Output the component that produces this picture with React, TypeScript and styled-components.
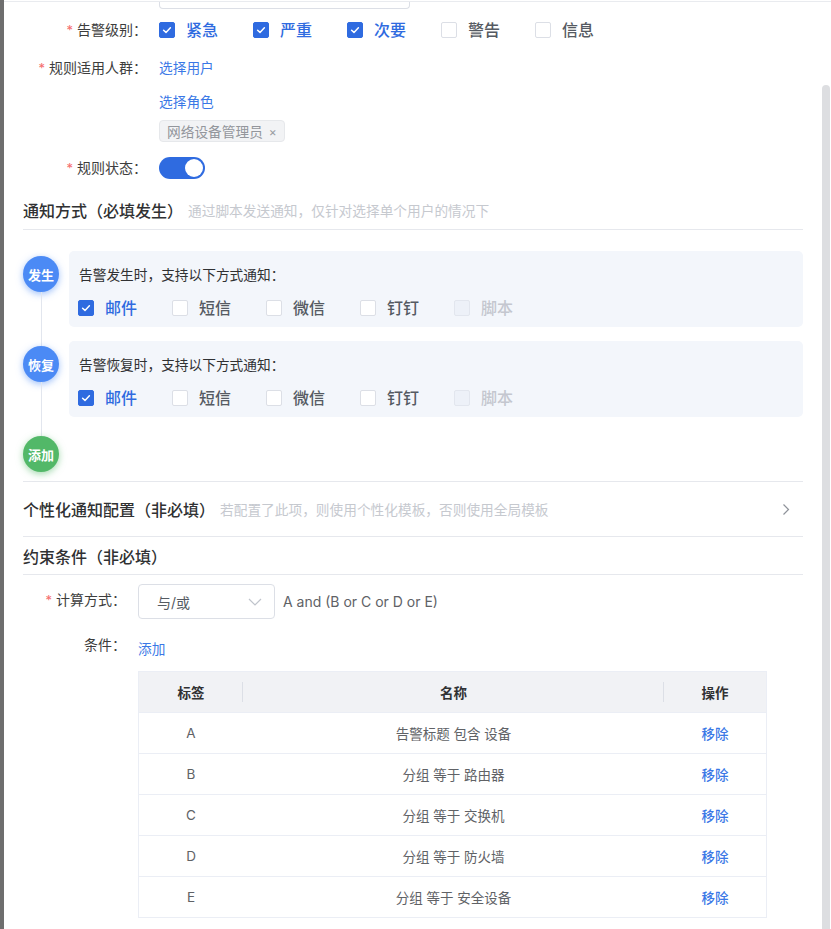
import React from "react";
import styled, { createGlobalStyle } from "styled-components";

const GlobalStyle = createGlobalStyle`
  html, body { margin: 0; padding: 0; background: #fff; }
  body {
    font-family: "Inter", "Noto Sans CJK SC", sans-serif;
    color: #303133;
    -webkit-font-smoothing: antialiased;
  }
  * { box-sizing: border-box; }
`;

const BLUE = "#2f6be0";
const LINK = "#3a78e6";

const Page = styled.div`
  position: relative;
  display: flex;
  min-height: 929px;
  height: 929px;
  overflow: hidden;
  background: #fff;
`;

const SideStrip = styled.div`
  width: 4px;
  flex: none;
  background: #6e6e6e;
`;

const Main = styled.div`
  flex: 1;
  display: flex;
  flex-direction: column;
`;

const TopBar = styled.div`
  margin-top: 1px;
  border-top: 1px solid #e9ebef;
  padding-left: 155px;
  height: 7px;
`;

const InputStub = styled.div`
  width: 251px;
  height: 7px;
  border: 1px solid #dcdfe6;
  border-top: 0;
  border-radius: 0 0 4px 4px;
`;

const Content = styled.div`
  padding: 0 28px 0 19px;
  display: flex;
  flex-direction: column;
`;

const FormItem = styled.div<{ $label: number; $mt: number }>`
  display: grid;
  grid-template-columns: ${(p) => p.$label}px 1fr;
  margin-top: ${(p) => p.$mt}px;
  align-items: start;
`;

const Label = styled.div`
  text-align: right;
  padding-right: 12px;
  font-size: 14px;
  line-height: 32px;
  color: #3d3d3d;
  white-space: nowrap;
`;

const Star = styled.span`
  color: #f56c6c;
  margin-right: 4px;
  font-size: 13px;
`;

const Field = styled.div<{ $h?: number }>`
  display: flex;
  align-items: center;
  min-height: ${(p) => p.$h ?? 32}px;
`;

const FieldColumn = styled.div`
  display: flex;
  flex-direction: column;
  align-items: flex-start;
`;

const CheckGroup = styled.div`
  display: flex;
  align-items: center;
  height: 22px;
`;

const CheckItem = styled.label<{ $checked?: boolean; $disabled?: boolean }>`
  width: 94px;
  display: inline-flex;
  align-items: center;
  gap: 11px;
  font-size: 16px;
  line-height: 22px;
  font-weight: 500;
  color: ${(p) => (p.$disabled ? "#c4c7cf" : p.$checked ? BLUE : "#555a62")};
  white-space: nowrap;
`;

const Box = styled.span<{ $checked?: boolean; $disabled?: boolean }>`
  width: 16px;
  height: 16px;
  flex: none;
  border-radius: 2px;
  display: inline-flex;
  align-items: center;
  justify-content: center;
  border: 1px solid
    ${(p) => (p.$checked ? BLUE : p.$disabled ? "#e2e6ee" : "#dcdfe6")};
  background: ${(p) => (p.$checked ? BLUE : p.$disabled ? "#edf1f8" : "#fff")};
`;

const LinkText = styled.a<{ $mt?: number; $pt?: number; $lh?: number }>`
  display: block;
  color: ${LINK};
  font-size: 13.7px;
  line-height: ${(p) => p.$lh ?? 32}px;
  margin-top: ${(p) => p.$mt ?? 0}px;
  padding-top: ${(p) => p.$pt ?? 0}px;
  cursor: pointer;
  text-decoration: none;
`;

const Tag = styled.span`
  margin-top: 2px;
  height: 22px;
  display: inline-flex;
  align-items: center;
  gap: 6px;
  padding: 0 7px;
  background: #f2f3f5;
  border: 1px solid #e6e8eb;
  border-radius: 4px;
  color: #93969c;
  font-size: 13.7px;
`;

const TagClose = styled.span`
  font-size: 12px;
  color: #9a9da3;
`;

const Switch = styled.span<{ $on: boolean }>`
  width: 46px;
  height: 22px;
  border-radius: 11px;
  background: ${(p) => (p.$on ? BLUE : "#dcdfe6")};
  display: inline-flex;
  align-items: center;
  justify-content: ${(p) => (p.$on ? "flex-end" : "flex-start")};
  padding: 0 2px;
`;

const Knob = styled.span`
  width: 18px;
  height: 18px;
  border-radius: 50%;
  background: #fff;
`;

const SectionHeader = styled.div<{ $mt: number; $h: number }>`
  margin-top: ${(p) => p.$mt}px;
  height: ${(p) => p.$h + 1}px;
  border-bottom: 1px solid #e6e8ed;
  display: flex;
  align-items: center;
  white-space: nowrap;
`;

const CollapseRow = styled.div`
  margin-top: 9px;
  height: 56px;
  border-top: 1px solid #e6e8ed;
  border-bottom: 1px solid #e6e8ed;
  display: flex;
  align-items: center;
  padding-right: 13px;
  white-space: nowrap;
`;

const SectionTitle = styled.span`
  font-size: 16px;
  color: #303133;
  font-weight: 500;
`;

const Hint = styled.span<{ $ml: number }>`
  margin-left: ${(p) => p.$ml}px;
  font-size: 13.7px;
  color: #c6c9cf;
`;

const Spacer = styled.span`
  flex: 1;
`;

const Timeline = styled.div`
  margin-top: 21px;
  display: flex;
  flex-direction: column;
  gap: 14px;
`;

const TItem = styled.div`
  display: flex;
`;

const TRail = styled.div<{ $line: boolean }>`
  width: 46px;
  flex: none;
  position: relative;
  &::after {
    content: "";
    display: ${(p) => (p.$line ? "block" : "none")};
    position: absolute;
    left: 17.5px;
    width: 1px;
    top: 41px;
    bottom: -19px;
    background: #e2e6ee;
  }
`;

const Dot = styled.div<{ $color: string }>`
  margin-top: 5px;
  width: 36px;
  height: 36px;
  border-radius: 50%;
  background: ${(p) => p.$color};
  color: #fff;
  font-size: 13px;
  font-weight: 600;
  display: flex;
  align-items: center;
  justify-content: center;
  box-shadow: 0 2px 7px ${(p) => p.$color}88;
`;

const Card = styled.div`
  flex: 1;
  background: #f3f6fb;
  border-radius: 5px;
  padding: 14px 10px 8px 9px;
`;

const CardTitle = styled.div`
  font-size: 13.7px;
  line-height: 20px;
  color: #303133;
  padding-left: 1px;
`;

const CardChecks = styled(CheckGroup)`
  margin-top: 12px;
`;

const Select = styled.div`
  width: 137px;
  height: 35px;
  border: 1px solid #dcdfe6;
  border-radius: 4px;
  display: flex;
  align-items: center;
  padding: 0 12px 0 18px;
  font-size: 14px;
  color: #555a62;
`;

const Formula = styled.span`
  margin-left: 8px;
  font-size: 14px;
  color: #606266;
`;

const Table = styled.div`
  margin-top: 10px;
  width: 629px;
  border: 1px solid #ebeef5;
`;

const TRow = styled.div<{ $head?: boolean }>`
  display: grid;
  grid-template-columns: 104px 421px 1fr;
  height: ${(p) => (p.$head ? 40 : 41)}px;
  background: ${(p) => (p.$head ? "#f1f2f5" : "#fff")};
  border-top: ${(p) => (p.$head ? "0" : "1px solid #ebeef5")};
`;

const Cell = styled.div<{ $head?: boolean; $sep?: boolean; $link?: boolean }>`
  position: relative;
  display: flex;
  align-items: center;
  justify-content: center;
  font-size: 13.5px;
  font-weight: ${(p) => (p.$head ? 600 : p.$link ? 500 : 400)};
  color: ${(p) => (p.$link ? LINK : p.$head ? "#303133" : "#606266")};
  white-space: pre;
  &::after {
    content: "";
    display: ${(p) => (p.$sep ? "block" : "none")};
    position: absolute;
    right: 0;
    top: 10px;
    height: 20px;
    width: 1px;
    background: #dcdfe6;
  }
`;

const ScrollThumb = styled.div`
  position: absolute;
  right: 1px;
  top: 85px;
  bottom: -10px;
  width: 8px;
  border-radius: 4px;
  background: #dddee1;
`;

const Check = () => (
  <svg width="10" height="10" viewBox="0 0 10 10">
    <polyline
      points="1.6,5.2 4,7.4 8.4,2.8"
      fill="none"
      stroke="#fff"
      strokeWidth="1.5"
      strokeLinecap="round"
      strokeLinejoin="round"
    />
  </svg>
);

type Opt = { label: string; checked?: boolean; disabled?: boolean };

const CheckOption = ({ label, checked, disabled }: Opt) => (
  <CheckItem $checked={checked} $disabled={disabled}>
    <Box $checked={checked} $disabled={disabled}>
      {checked && <Check />}
    </Box>
    {label}
  </CheckItem>
);

const levels: Opt[] = [
  { label: "紧急", checked: true },
  { label: "严重", checked: true },
  { label: "次要", checked: true },
  { label: "警告" },
  { label: "信息" },
];

const channels: Opt[] = [
  { label: "邮件", checked: true },
  { label: "短信" },
  { label: "微信" },
  { label: "钉钉" },
  { label: "脚本", disabled: true },
];

const rows = [
  ["A", "告警标题 包含 设备"],
  ["B", "分组 等于 路由器"],
  ["C", "分组 等于 交换机"],
  ["D", "分组 等于 防火墙"],
  ["E", "分组 等于 安全设备"],
];

const stages = [
  { dot: "发生", title: "告警发生时，支持以下方式通知：" },
  { dot: "恢复", title: "告警恢复时，支持以下方式通知：" },
];

export default function App() {
  return (
    <>
      <GlobalStyle />
      <Page>
        <SideStrip />
        <Main>
          <TopBar>
            <InputStub />
          </TopBar>
          <Content>
            <FormItem $label={136} $mt={6}>
              <Label>
                <Star>*</Star>告警级别：
              </Label>
              <Field>
                <CheckGroup>
                  {levels.map((o) => (
                    <CheckOption key={o.label} {...o} />
                  ))}
                </CheckGroup>
              </Field>
            </FormItem>

            <FormItem $label={136} $mt={6}>
              <Label>
                <Star>*</Star>规则适用人群：
              </Label>
              <FieldColumn>
                <LinkText>选择用户</LinkText>
                <LinkText $mt={2}>选择角色</LinkText>
                <Tag>
                  网络设备管理员<TagClose>×</TagClose>
                </Tag>
              </FieldColumn>
            </FormItem>

            <FormItem $label={136} $mt={10}>
              <Label>
                <Star>*</Star>规则状态：
              </Label>
              <Field>
                <Switch $on>
                  <Knob />
                </Switch>
              </Field>
            </FormItem>

            <SectionHeader $mt={7} $h={38}>
              <SectionTitle>通知方式（必填发生）</SectionTitle>
              <Hint $ml={5}>通过脚本发送通知，仅针对选择单个用户的情况下</Hint>
            </SectionHeader>

            <Timeline>
              {stages.map((s) => (
                <TItem key={s.dot}>
                  <TRail $line>
                    <Dot $color="#4b8af5">{s.dot}</Dot>
                  </TRail>
                  <Card>
                    <CardTitle>{s.title}</CardTitle>
                    <CardChecks>
                      {channels.map((o) => (
                        <CheckOption key={o.label} {...o} />
                      ))}
                    </CardChecks>
                  </Card>
                </TItem>
              ))}
              <TItem>
                <TRail $line={false}>
                  <Dot $color="#52b868">添加</Dot>
                </TRail>
              </TItem>
            </Timeline>

            <CollapseRow>
              <SectionTitle>个性化通知配置（非必填）</SectionTitle>
              <Hint $ml={5}>若配置了此项，则使用个性化模板，否则使用全局模板</Hint>
              <Spacer />
              <svg width="8" height="13" viewBox="0 0 8 13">
                <polyline
                  points="1.5,1.5 6.5,6.5 1.5,11.5"
                  fill="none"
                  stroke="#8f939a"
                  strokeWidth="1.2"
                />
              </svg>
            </CollapseRow>

            <SectionHeader $mt={0} $h={37}>
              <SectionTitle>约束条件（非必填）</SectionTitle>
            </SectionHeader>

            <FormItem $label={115} $mt={9}>
              <Label>
                <Star>*</Star>计算方式：
              </Label>
              <Field $h={35}>
                <Select>
                  与/或
                  <Spacer />
                  <svg width="14" height="8" viewBox="0 0 14 8">
                    <polyline
                      points="1,1 7,7 13,1"
                      fill="none"
                      stroke="#c0c4cc"
                      strokeWidth="1.2"
                    />
                  </svg>
                </Select>
                <Formula>A and (B or C or D or E)</Formula>
              </Field>
            </FormItem>

            <FormItem $label={115} $mt={10}>
              <Label>条件：</Label>
              <FieldColumn>
                <LinkText $pt={8} $lh={24}>
                  添加
                </LinkText>
                <Table>
                  <TRow $head>
                    <Cell $head $sep>
                      标签
                    </Cell>
                    <Cell $head $sep>
                      名称
                    </Cell>
                    <Cell $head>操作</Cell>
                  </TRow>
                  {rows.map(([k, name]) => (
                    <TRow key={k}>
                      <Cell>{k}</Cell>
                      <Cell>{name}</Cell>
                      <Cell $link>移除</Cell>
                    </TRow>
                  ))}
                </Table>
              </FieldColumn>
            </FormItem>
          </Content>
        </Main>
        <ScrollThumb />
      </Page>
    </>
  );
}
